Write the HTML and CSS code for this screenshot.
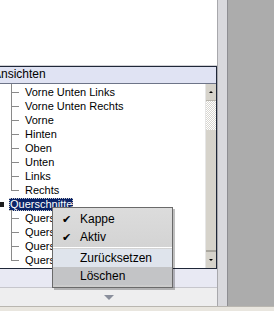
FILE: index.html
```html
<!DOCTYPE html>
<html lang="de">
<head>
    <meta charset="UTF-8">
    <title>Ansichten</title>
    <link rel="stylesheet" href="styles.css">
</head>
<body>
    <div class="frame">
        <div class="left">
            <div class="canvas"></div>
            <div class="panel">
                <div class="panel-head">Ansichten</div>
                <div class="panel-body">
                    <ul class="tree">
                        <li class="child">Vorne Unten Links</li>
                        <li class="child">Vorne Unten Rechts</li>
                        <li class="child">Vorne</li>
                        <li class="child">Hinten</li>
                        <li class="child">Oben</li>
                        <li class="child">Unten</li>
                        <li class="child">Links</li>
                        <li class="child last">Rechts</li>
                        <li class="root"><span class="toggle"></span><span class="selected">Querschnitte</span></li>
                        <li class="child">Querschnitt 1</li>
                        <li class="child">Querschnitt 2</li>
                        <li class="child">Querschnitt 3</li>
                        <li class="child last">Querschnitt 4</li>
                    </ul>
                    <div class="scrollbar">
                        <div class="sb-btn up"></div>
                        <div class="sb-track"></div>
                        <div class="sb-thumb"></div>
                        <div class="sb-btn down"></div>
                    </div>
                </div>
            </div>
            <div class="band"></div>
            <div class="expander"><span class="arrow"></span></div>
        </div>
        <div class="strip"></div>
        <div class="backdrop"></div>
    </div>
    <div class="footer"></div>

    <div class="menu">
        <div class="item"><span class="check">✔</span><span>Kappe</span></div>
        <div class="item"><span class="check">✔</span><span>Aktiv</span></div>
        <div class="sep"></div>
        <div class="item hover"><span class="check"></span><span>Zurücksetzen</span></div>
        <div class="item active"><span class="check"></span><span>Löschen</span></div>
    </div>
</body>
</html>
```

FILE: styles.css
```css
body {
    margin: 0;
    width: 274px;
    height: 311px;
    overflow: hidden;
    position: relative;
    font-family: "Liberation Sans", Arial, sans-serif;
    font-size: 11px;
    color: #000;
    background: #e9e6df;
}
.frame {
    display: flex;
    height: 306px;
    border-bottom: 1px solid #b9b6b0;
}
.left {
    width: 217px;
    display: flex;
    flex-direction: column;
    background: #ffffff;
}
.canvas {
    height: 65px;
    border-bottom: 1px solid #d0d0d4;
}
.panel {
    margin-left: -9px;
    border: 1px solid #1f2738;
    background: #ffffff;
}
.panel-head {
    height: 16px;
    line-height: 15px;
    font-size: 12px;
    text-indent: 1px;
    background: #e0e3f3;
    border-bottom: 1px solid #6d7488;
}
.panel-body {
    display: flex;
    height: 184px;
}
.tree {
    list-style: none;
    margin: 0;
    padding: 1px 0 0 0;
    flex: 1;
    overflow: hidden;
}
.tree li {
    height: 14px;
    line-height: 14px;
    position: relative;
    white-space: nowrap;
}
.child {
    padding-left: 33px;
}
.child::before {
    content: "";
    position: absolute;
    left: 19px;
    top: -1px;
    height: 15px;
    border-left: 1px solid #8a8a8a;
}
.child.last::before {
    height: 8px;
}
.child::after {
    content: "";
    position: absolute;
    left: 19px;
    top: 7px;
    width: 8px;
    border-top: 1px solid #8a8a8a;
}
.root {
    padding-left: 17px;
}
.toggle {
    position: absolute;
    left: 7px;
    top: 5px;
    width: 5px;
    height: 5px;
    background: #1d1d1d;
}
.selected {
    display: inline-block;
    padding: 0 1px;
    height: 13px;
    line-height: 13px;
    background: #0b2468;
    color: #ffffff;
    outline: 1px dotted #c8c8c8;
    outline-offset: -1px;
}
.scrollbar {
    width: 10px;
    display: flex;
    flex-direction: column;
    border-left: 1px solid #e6e6e6;
}
.sb-btn {
    height: 16px;
    background: #d6d3cb;
    border-bottom: 1px solid #b8b5ad;
    position: relative;
}
.sb-btn::after {
    content: "";
    position: absolute;
    left: 3px;
    top: 7px;
    border-left: 2px solid transparent;
    border-right: 2px solid transparent;
}
.up::after {
    border-bottom: 2px solid #000;
}
.down {
    border-top: 2px solid #a9a69e;
    border-bottom: none;
}
.down::after {
    border-top: 2px solid #000;
}
.sb-track {
    height: 29px;
    background: repeating-conic-gradient(#ffffff 0 25%, #d8d6d0 0 50%) 0 0 / 2px 2px;
}
.sb-thumb {
    flex: 1;
    background: #d6d3cb;
}
.band {
    height: 18px;
    background: #e8e9f3;
    border-bottom: 1px solid #c6c6cc;
}
.expander {
    flex: 1;
    background: #eeeeef;
    display: flex;
    justify-content: center;
    align-items: center;
}
.arrow {
    width: 0;
    height: 0;
    border-left: 5px solid transparent;
    border-right: 5px solid transparent;
    border-top: 5px solid #8a8f9c;
}
.strip {
    width: 9px;
    background: #d9d9dd;
    border-left: 1px solid #a8a8ac;
    border-right: 1px solid #8e8e92;
}
.backdrop {
    flex: 1;
    background: #acacac;
}
.footer {
    height: 4px;
}
.menu {
    position: absolute;
    left: 52px;
    top: 207px;
    width: 119px;
    padding: 2px 0;
    background: linear-gradient(#dcdcdc, #cbcbcb);
    border: 1px solid #6a6a6a;
    box-shadow: 2px 2px 0 rgba(0, 0, 0, 0.25);
}
.item {
    height: 18px;
    line-height: 18px;
    display: flex;
    font-size: 12px;
}
.check {
    width: 27px;
    flex: none;
    text-align: center;
    font-size: 11px;
}
.sep {
    height: 1px;
    margin: 1px 0;
    background: #ffffff;
}
.hover {
    background: #dfe4ec;
}
.active {
    background: #c3c4c6;
}
```
